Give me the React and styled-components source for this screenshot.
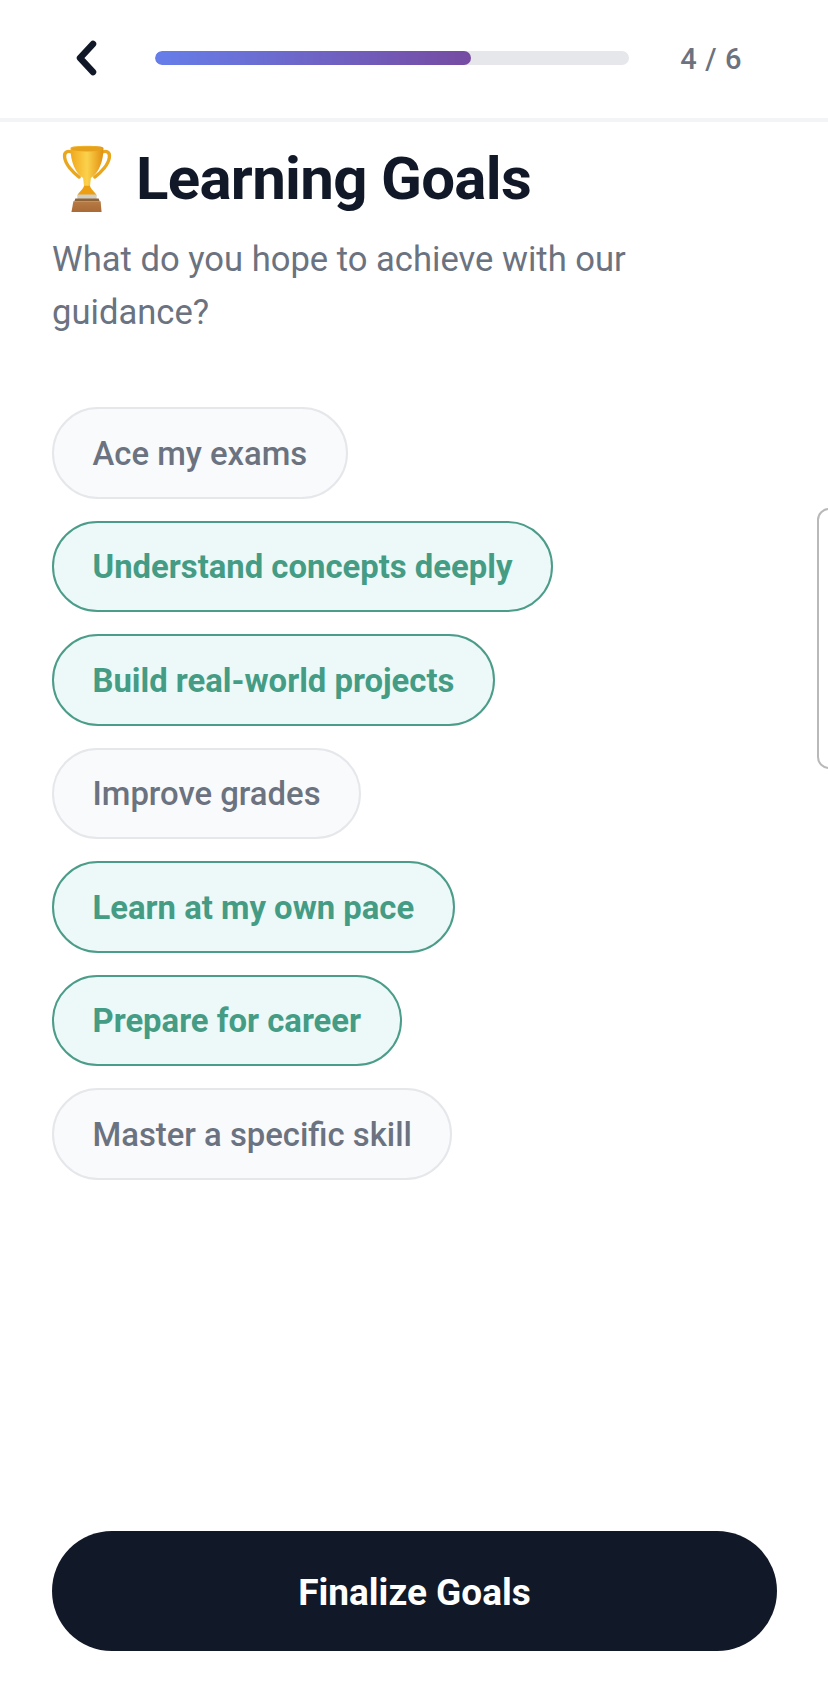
import React from 'react';
import styled, { createGlobalStyle } from 'styled-components';

const GlobalStyle = createGlobalStyle`
  html, body {
    margin: 0;
    padding: 0;
    background: #fff;
  }
  * {
    box-sizing: border-box;
  }
`;

const Page = styled.div`
  position: relative;
  display: flex;
  flex-direction: column;
  width: 828px;
  height: 1701px;
  overflow: hidden;
  background: #fff;
  font-family: Roboto, 'Liberation Sans', sans-serif;
`;

const Header = styled.header`
  display: flex;
  align-items: center;
  height: 122px;
  padding: 0 86px 3px 72px;
  border-bottom: 4px solid #f3f4f6;
`;

const BackButton = styled.button`
  display: flex;
  width: 30px;
  height: 38px;
  padding: 0;
  margin-right: 53px;
  border: 0;
  background: none;
`;

const Track = styled.div`
  flex: 1;
  height: 14px;
  border-radius: 7px;
  background: #e5e7eb;
  overflow: hidden;
`;

const Fill = styled.div`
  height: 100%;
  border-radius: 7px;
  background: linear-gradient(90deg, #667eea, #764ba2);
`;

const Counter = styled.span`
  margin-left: 51px;
  padding-top: 2px;
  font-size: 29px;
  font-weight: 500;
  color: #6b7280;
  letter-spacing: 0.6px;
`;

const Main = styled.main`
  display: flex;
  flex-direction: column;
  flex: 1;
  padding: 22px 52px 0;
`;

const Title = styled.h1`
  display: flex;
  align-items: center;
  gap: 24px;
  margin: 0;
  padding-left: 10px;
  font-size: 60px;
  line-height: 70px;
  font-weight: 700;
  color: #111827;
  letter-spacing: -0.7px;
`;

const Subtitle = styled.p`
  width: 640px;
  margin: 19px 0 0;
  font-size: 34.6px;
  line-height: 53px;
  color: #6b7280;
`;

const ChipList = styled.div`
  display: flex;
  flex-direction: column;
  align-items: flex-start;
  gap: 22px;
  margin-top: 68px;
`;

const Chip = styled.div`
  display: flex;
  align-items: center;
  height: 91.5px;
  padding: 2px 38.5px 0;
  border-radius: 46px;
  border: 2px solid ${(p) => (p.$active ? '#4c9c8a' : '#e5e7eb')};
  background: ${(p) => (p.$active ? '#ecf9f8' : '#f9fafb')};
  color: ${(p) => (p.$active ? '#459c85' : '#6b7280')};
  font-size: 32.85px;
  font-weight: ${(p) => (p.$active ? 700 : 500)};
`;

const Footer = styled.footer`
  padding: 0 51px 50px 52px;
`;

const PrimaryButton = styled.button`
  display: block;
  width: 100%;
  height: 120px;
  padding: 3px 0 0;
  border: 0;
  border-radius: 60px;
  background: #111827;
  color: #fff;
  font-family: inherit;
  font-size: 37px;
  font-weight: 700;
`;

const SideHandle = styled.div`
  position: absolute;
  top: 508px;
  left: 817px;
  width: 40px;
  height: 261px;
  border: 2px solid #b9b9b9;
  border-radius: 12px;
`;

function Trophy() {
  return (
    <svg width="50" height="68" viewBox="0 0 50 70" aria-hidden="true">
      <defs>
        <linearGradient id="cup" x1="0" y1="0" x2="1" y2="0">
          <stop offset="0" stopColor="#f0a81c" />
          <stop offset="0.5" stopColor="#fbd24c" />
          <stop offset="1" stopColor="#e28f10" />
        </linearGradient>
        <linearGradient id="base" x1="0" y1="0" x2="0" y2="1">
          <stop offset="0" stopColor="#b77b45" />
          <stop offset="1" stopColor="#a96a36" />
        </linearGradient>
      </defs>
      <path
        d="M11 8C5 5 1 7 2 13c1 7 8 15 15 20M39 8c6-3 10-1 9 5-1 7-8 15-15 20"
        fill="none"
        stroke="#e9a71f"
        strokeWidth="3.5"
        strokeLinecap="round"
      />
      <path d="M8 3c0-3 34-3 34 0 0 14-5 26-13 31l-1 9h-6l-1-9C13 29 8 17 8 3z" fill="url(#cup)" />
      <ellipse cx="25" cy="4" rx="16" ry="2.8" fill="#e6a21c" />
      <path d="M22 42h6c1 4 5 6 7 10H15c2-4 6-6 7-10z" fill="#ec9f12" />
      <rect x="15" y="51" width="20" height="5" rx="1.5" fill="#cfcfc6" />
      <path d="M13 55h24l1 3H12z" fill="#8f6236" />
      <path d="M11 58h28l1 11H9z" fill="url(#base)" />
    </svg>
  );
}

const goals = [
  { label: 'Ace my exams', active: false },
  { label: 'Understand concepts deeply', active: true },
  { label: 'Build real-world projects', active: true },
  { label: 'Improve grades', active: false },
  { label: 'Learn at my own pace', active: true },
  { label: 'Prepare for career', active: true },
  { label: 'Master a specific skill', active: false },
];

export default function App() {
  return (
    <Page>
      <GlobalStyle />
      <Header>
        <BackButton aria-label="Back">
          <svg width="30" height="38" viewBox="0 0 30 38" fill="none">
            <path d="M21 5L8 19l13 14" stroke="#111827" strokeWidth="6.5" strokeLinecap="round" strokeLinejoin="round" />
          </svg>
        </BackButton>
        <Track>
          <Fill style={{ width: `${(4 / 6) * 100}%` }} />
        </Track>
        <Counter>4 / 6</Counter>
      </Header>
      <Main>
        <Title>
          <Trophy />
          Learning Goals
        </Title>
        <Subtitle>What do you hope to achieve with our guidance?</Subtitle>
        <ChipList>
          {goals.map((goal) => (
            <Chip key={goal.label} $active={goal.active}>
              {goal.label}
            </Chip>
          ))}
        </ChipList>
      </Main>
      <Footer>
        <PrimaryButton>Finalize Goals</PrimaryButton>
      </Footer>
      <SideHandle />
    </Page>
  );
}
